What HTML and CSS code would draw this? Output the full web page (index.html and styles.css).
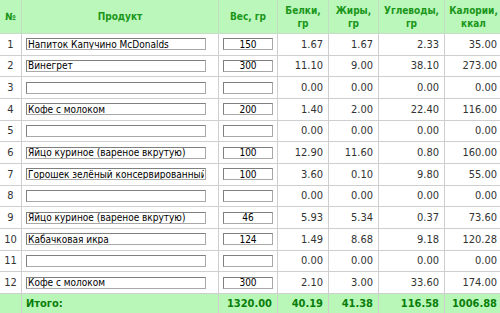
FILE: index.html
```html
<!DOCTYPE html>
<html>
<head>
<meta charset="utf-8">
<link rel="stylesheet" href="styles.css">
</head>
<body>
<table class="calc">
  <colgroup>
    <col class="c-num"><col class="c-prod"><col class="c-w"><col class="c-b"><col class="c-f"><col class="c-u"><col class="c-k">
  </colgroup>
  <thead>
    <tr>
      <th>№</th><th>Продукт</th><th>Вес, гр</th><th>Белки,<br>гр</th><th>Жиры,<br>гр</th><th>Углеводы,<br>гр</th><th>Калории,<br>ккал</th>
    </tr>
  </thead>
  <tbody>
    <tr><td class="n">1</td><td class="p"><input class="pi" value="Напиток Капучино McDonalds"></td><td class="w"><input class="wi" value="150"></td><td>1.67</td><td>1.67</td><td>2.33</td><td>35.00</td></tr>
    <tr><td class="n">2</td><td class="p"><input class="pi" value="Винегрет"></td><td class="w"><input class="wi" value="300"></td><td>11.10</td><td>9.00</td><td>38.10</td><td>273.00</td></tr>
    <tr><td class="n">3</td><td class="p"><input class="pi" value=""></td><td class="w"><input class="wi" value=""></td><td>0.00</td><td>0.00</td><td>0.00</td><td>0.00</td></tr>
    <tr><td class="n">4</td><td class="p"><input class="pi" value="Кофе с молоком"></td><td class="w"><input class="wi" value="200"></td><td>1.40</td><td>2.00</td><td>22.40</td><td>116.00</td></tr>
    <tr><td class="n">5</td><td class="p"><input class="pi" value=""></td><td class="w"><input class="wi" value=""></td><td>0.00</td><td>0.00</td><td>0.00</td><td>0.00</td></tr>
    <tr><td class="n">6</td><td class="p"><input class="pi" value="Яйцо куриное (вареное вкрутую)"></td><td class="w"><input class="wi" value="100"></td><td>12.90</td><td>11.60</td><td>0.80</td><td>160.00</td></tr>
    <tr><td class="n">7</td><td class="p"><input class="pi" value="Горошек зелёный консервированный"></td><td class="w"><input class="wi" value="100"></td><td>3.60</td><td>0.10</td><td>9.80</td><td>55.00</td></tr>
    <tr><td class="n">8</td><td class="p"><input class="pi" value=""></td><td class="w"><input class="wi" value=""></td><td>0.00</td><td>0.00</td><td>0.00</td><td>0.00</td></tr>
    <tr><td class="n">9</td><td class="p"><input class="pi" value="Яйцо куриное (вареное вкрутую)"></td><td class="w"><input class="wi" value="46"></td><td>5.93</td><td>5.34</td><td>0.37</td><td>73.60</td></tr>
    <tr><td class="n">10</td><td class="p"><input class="pi" value="Кабачковая икра"></td><td class="w"><input class="wi" value="124"></td><td>1.49</td><td>8.68</td><td>9.18</td><td>120.28</td></tr>
    <tr><td class="n">11</td><td class="p"><input class="pi" value=""></td><td class="w"><input class="wi" value=""></td><td>0.00</td><td>0.00</td><td>0.00</td><td>0.00</td></tr>
    <tr><td class="n">12</td><td class="p"><input class="pi" value="Кофе с молоком"></td><td class="w"><input class="wi" value="300"></td><td>2.10</td><td>3.00</td><td>33.60</td><td>174.00</td></tr>
  </tbody>
  <tfoot>
    <tr><td></td><td class="label">Итого:</td><td>1320.00</td><td>40.19</td><td>41.38</td><td>116.58</td><td>1006.88</td></tr>
  </tfoot>
</table>
</body>
</html>
```

FILE: styles.css
```css
html, body {
  margin: 0;
  padding: 0;
  background: #ffffff;
  overflow: hidden;
}

.calc {
  border-collapse: collapse;
  table-layout: fixed;
  width: 503px;
  margin: -1px 0 0 -1px;
  font-family: "DejaVu Sans Condensed", "DejaVu Sans", sans-serif;
  font-stretch: condensed;
  font-size: 11px;
  color: #333333;
}

.c-num { width: 22px; }
.c-prod { width: 197px; }
.c-w { width: 59px; }
.c-b { width: 51px; }
.c-f { width: 50px; }
.c-u { width: 66px; }
.c-k { width: 58px; }

.calc th,
.calc td {
  border: 1px solid #cfcfcf;
  padding: 0 5px 0 0;
  white-space: nowrap;
}

.calc thead th {
  background: #bbf7bb;
  color: #1a961a;
  font-weight: bold;
  font-size: 10px;
  text-align: center;
  line-height: 13px;
  height: 33px;
  padding: 0;
  border-color: #c6dcc6;
}

.calc tbody td {
  height: 20.67px;
  text-align: right;
  line-height: 13px;
}

.calc tbody td.n {
  text-align: center;
  padding: 0;
}

.calc tbody td.p {
  text-align: left;
  padding: 0 0 0 4px;
}

.calc tbody td.w {
  text-align: center;
  padding: 0;
}

.pi,
.wi {
  display: block;
  box-sizing: border-box;
  height: 12px;
  margin: 0;
  padding: 0 1px;
  border: 1px solid #a8a8a8;
  border-top-color: #808080;
  border-left-color: #808080;
  font-family: "DejaVu Sans Condensed", "DejaVu Sans", sans-serif;
  font-stretch: condensed;
  font-size: 10px;
  line-height: 10px;
  color: #000000;
  background: #ffffff;
}

.pi { width: 180px; }

.wi {
  width: 50px;
  margin-left: 4px;
  text-align: center;
}

.calc tfoot td {
  background: #b9f7b9;
  color: #0a7d0a;
  font-weight: bold;
  text-align: right;
  height: 20px;
  border-color: #cfcfcf;
}

.calc tfoot td.label {
  text-align: left;
  padding-left: 4px;
}
```
